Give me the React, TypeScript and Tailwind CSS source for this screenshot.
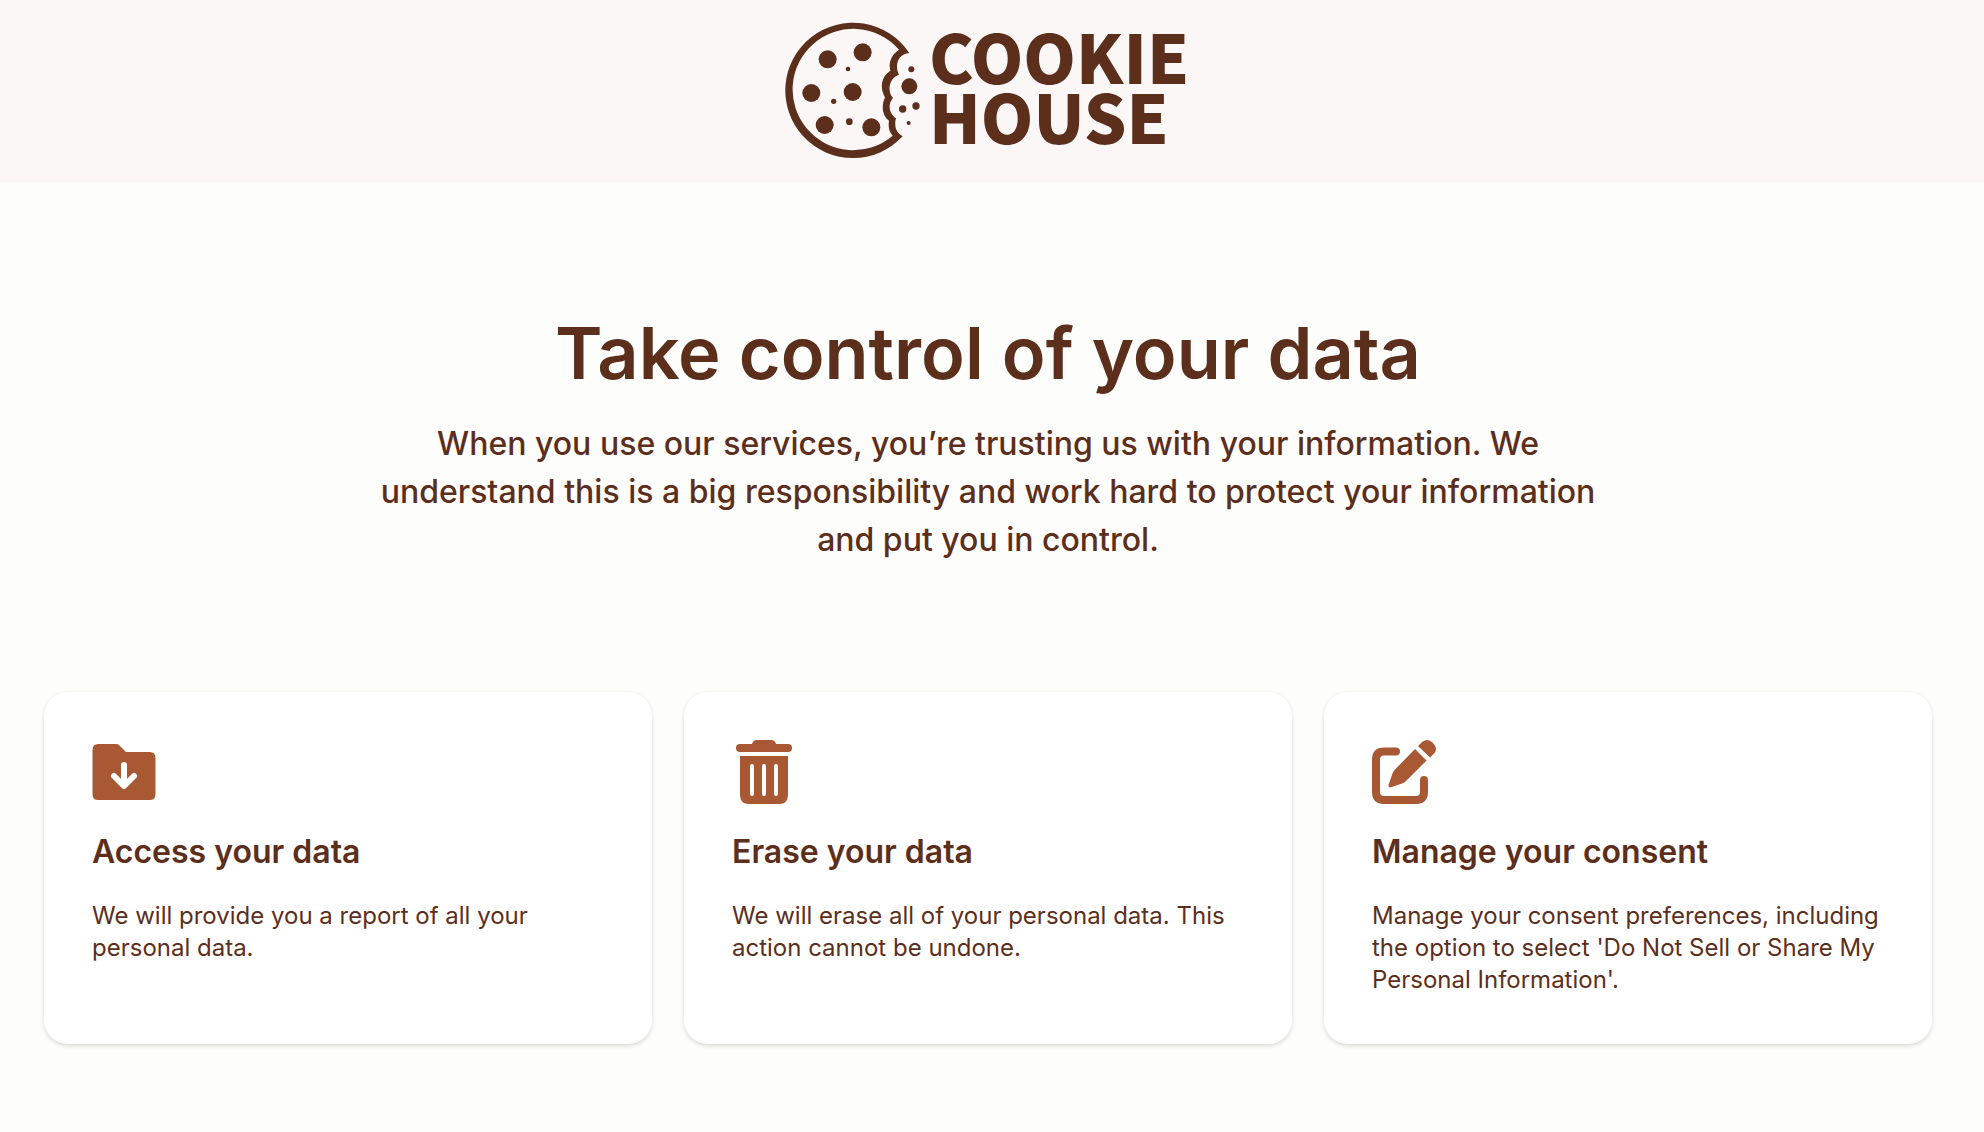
import React from "react";

function CookieMark() {
  return (
    <svg className="size-[140px] shrink-0" viewBox="40 30 420 420" fill="#5c2e1c" aria-hidden="true">
      <path
        fillRule="evenodd"
        d="M419 129A203 203 0 1 0 399 379C387 371 377 362 377 345Q376 334 379 325C360 312 352 285 370 264C352 244 357 205 388 194C375 170 382 132 419 129ZM388 119A182 182 0 1 0 369 377C358 366 355 350 358 332C338 318 334 288 346 262C328 233 337 196 362 183C356 160 363 135 388 119Z"
      />
      <circle cx="174" cy="148" r="27" />
      <circle cx="279" cy="127" r="27" />
      <circle cx="125" cy="249" r="27" />
      <circle cx="249" cy="246" r="27" />
      <circle cx="165" cy="345" r="27" />
      <circle cx="305" cy="352" r="27" />
      <circle cx="419" cy="229" r="24" />
      <circle cx="235" cy="177" r="7" />
      <circle cx="192" cy="274" r="8" />
      <circle cx="239" cy="335" r="10" />
      <circle cx="425" cy="178" r="9" />
      <circle cx="399" cy="297" r="11" />
      <circle cx="439" cy="288" r="11" />
      <circle cx="417" cy="339" r="6" />
    </svg>
  );
}

function FolderIcon() {
  return (
    <svg className="size-16" viewBox="0 0 64 64" aria-hidden="true">
      <path
        fill="#a85833"
        d="M6 4H24Q26 4 27.400 5.400L34 12H58Q63.500 12 63.500 18V54Q63.500 60 58 60H6Q0.500 60 0.500 54V10Q0.500 4 6 4Z"
      />
      <path d="M32 25V45M22 36L32 46L42 36" fill="none" stroke="#fff" strokeWidth="6" strokeLinecap="round" strokeLinejoin="round" />
    </svg>
  );
}

function TrashIcon() {
  return (
    <svg className="size-16" viewBox="0 0 64 64" fill="#a85833" aria-hidden="true">
      <path d="M8 4H20Q21 0 25 0H39Q43 0 44 4H56Q60 4 60 8T56 12H8Q4 12 4 8T8 4Z" />
      <path
        fillRule="evenodd"
        d="M8 16H56V55Q56 64 47 64H17Q8 64 8 55ZM20 24Q18 24 18 26V54Q18 56 20 56T22 54V26Q22 24 20 24ZM32 24Q30 24 30 26V54Q30 56 32 56T34 54V26Q34 24 32 24ZM44 24Q42 24 42 26V54Q42 56 44 56T46 54V26Q46 24 44 24Z"
      />
    </svg>
  );
}

function EditIcon() {
  return (
    <svg className="size-16" viewBox="0 0 64 64" fill="#a85833" aria-hidden="true">
      <path d="M24 11.500H12Q4 11.500 4 19.500V52Q4 60 12 60H44Q52 60 52 52V40" fill="none" stroke="#a85833" strokeWidth="8" strokeLinecap="round" />
      <path d="M43 9L54.500 20.500L33.500 41.500Q32 43 30 43.500L19 47.300Q16 48 16.500 45L20.500 33.500Q21 31.500 22.500 30Z" />
      <path d="M46 6L49.500 2.500Q52 0 55 0T60.500 2.500Q64 6 64 9T61.500 14L58 17.500Z" />
    </svg>
  );
}

const actions = [
  { title: "Access your data", text: "We will provide you a report of all your personal data.", Icon: FolderIcon },
  { title: "Erase your data", text: "We will erase all of your personal data. This action cannot be undone.", Icon: TrashIcon },
  {
    title: "Manage your consent",
    text: "Manage your consent preferences, including the option to select 'Do Not Sell or Share My Personal Information'.",
    Icon: EditIcon,
  },
];

export default function App() {
  return (
    <div className="min-h-screen bg-[#fdfdfb] font-[Inter,sans-serif] text-[#5c2e1c]">
      <header className="flex justify-center bg-[#fbf7f6] pt-5 pb-[22px]">
        <div className="flex h-[140px] gap-1.5 pr-3">
          <CookieMark />
          <div className="pt-[5px] font-['Noto_Sans_CJK_SC',sans-serif] text-[67px] leading-[60px] font-black">
            COOKIE
            <br />
            HOUSE
          </div>
        </div>
      </header>
      <main className="pr-[52px] pb-[88px] pl-11">
        <section className="mx-auto max-w-[1248px] pt-[126px] text-center">
          <h1 className="text-[72px] leading-[90px] font-semibold">Take control of your data</h1>
          <p className="mt-[22px] text-[32px] leading-[48px] font-medium">
            When you use our services, you’re trusting us with your information. We understand this is a big responsibility and work hard to protect your information and put you in control.
          </p>
        </section>
        <section className="mt-32 grid grid-cols-3 gap-8">
          {actions.map(({ title, text, Icon }) => (
            <a key={title} href="#" className="block rounded-3xl bg-white p-12 shadow-[0_2px_4px_rgba(0,0,0,0.14)]">
              <Icon />
              <h2 className="mt-7 text-[32px] leading-10 font-semibold">{title}</h2>
              <p className="mt-7 text-2xl leading-8 font-normal">{text}</p>
            </a>
          ))}
        </section>
      </main>
    </div>
  );
}
